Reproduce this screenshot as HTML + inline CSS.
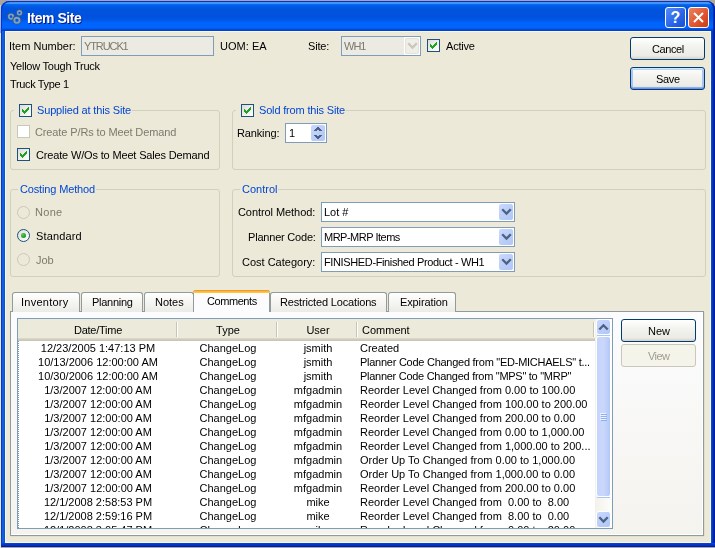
<!DOCTYPE html>
<html><head><meta charset="utf-8">
<style>
*{margin:0;padding:0;box-sizing:border-box}
html,body{width:715px;height:548px;overflow:hidden;background:#aca899;position:relative}
body{font-family:"Liberation Sans",sans-serif;font-size:11px;color:#000}
.a{position:absolute}
.t{position:absolute;font-size:11px;line-height:13px;white-space:nowrap;will-change:transform}
.g{color:#aca899}
.g2{color:#7d7a6d}
.b{color:#0046d5}
#win{left:1px;top:1px;width:714px;height:546px;border-radius:8px 8px 0 0;
 background:linear-gradient(90deg,#0019cf 0,#0855dd 1px,#166aee 2px,#0855dd 3px,#0855dd calc(100% - 4px),#0542cb calc(100% - 3px),#0130b8 calc(100% - 2px),#001ea0 calc(100% - 1px));overflow:hidden}
#title{left:0;top:0;width:714px;height:30px;border-radius:8px 8px 0 0;box-shadow:inset 1px 1px 0 #0831d9,inset -1px 0 0 #001ea0,inset -2px 0 0 #0130b8;
 background:linear-gradient(180deg,#0a3fd8 0,#0a3fd8 1px,#3d95ff 1px,#3d95ff 3px,#0a6cf0 3px,#005ce8 5px,#0053dc 8px,#0052de 17px,#005cf0 20px,#0064fd 22px,#0064fd 27px,#0050e0 28px,#003ccc 30px)}
#bottom{left:0;top:542px;width:714px;height:4px;background:linear-gradient(180deg,#0846dd,#0533c7 2px,#001b9e)}
#client{left:4px;top:30px;width:706px;height:512px;background:#ece9d8;border-top:1px solid #fff8e0;border-left:1px solid #fff8e0;border-right:1px solid #fff8e0;border-bottom:1px solid #fff8e0}
.ttl{will-change:transform;position:absolute;left:26px;top:9px;color:#fff;font:bold 14px "Liberation Sans",sans-serif;line-height:17px;letter-spacing:-0.45px;text-shadow:1px 1px 0 #0a1883;white-space:nowrap}
.tb{position:absolute;top:6px;width:21px;height:21px;border:1px solid #fff;border-radius:3px}
.field{position:absolute;border:1px solid #7f9db9;background:#fff}
.chk{position:absolute;width:13px;height:13px;border:1px solid #1c5180;background:linear-gradient(135deg,#dcdcd7,#fff)}
.chk.dis{border-color:#cac8bb;background:#fff}
.chk svg{position:absolute;left:2px;top:2px}
.grp{position:absolute;border:1px solid #d0d0bf;border-radius:3px}
.gl{position:absolute;background:#ece9d8;height:13px}
.btn{position:absolute;border:1px solid #003c74;border-radius:3px;background:linear-gradient(180deg,#fff 0,#f3f3ef 40%,#ecebe6 85%,#d6d0c5 100%);text-align:center;line-height:21px}
.btn.def{box-shadow:inset 0 1px 0 #cee7ff,inset 0 2px 0 #bcd4f6,inset 0 -1px 0 #6f91e6,inset 0 -2px 0 #8cb0ea,inset 2px 0 0 #aac4f4,inset -2px 0 0 #aac4f4}
.btn.dis{border-color:#c9c7ba;background:#f5f4ea;color:#a09d90}
.dd{position:absolute;width:14px;height:16px;border-radius:2px;background:linear-gradient(135deg,#cad8fd,#b9cdf8 60%,#b0c6f6)}
.dd svg{position:absolute;left:0;top:0}
.rad{position:absolute;width:13px;height:13px;border-radius:50%;border:1px solid #1c5180;background:linear-gradient(135deg,#dcdcd7,#fff)}
.rad.dis{border-color:#cac8bb;background:transparent}
.tab{position:absolute;top:292px;height:20px;border:1px solid #919b9c;border-bottom:none;border-radius:3px 3px 0 0;background:linear-gradient(180deg,#fff,#f3f3ef 60%,#ecebe6)}
.row{position:absolute;left:0;width:578px;height:14px}
.c1{position:absolute;left:0;width:160px;text-align:center}
.c2{position:absolute;left:160px;width:100px;text-align:center}
.c3{position:absolute;left:260px;width:80px;text-align:center}
.c4{position:absolute;left:342px;width:240px;text-align:left}
</style></head>
<body>
<div class="a" style="left:0;top:5px;width:1px;height:28px;background:linear-gradient(180deg,#c0d0f0,#90a8e0)"></div>
<div class="a" style="left:0;top:33px;width:1px;height:515px;background:#ece9d8"></div>
<div id="win" class="a">
 <div id="title" class="a">
  <svg class="a" style="left:2px;top:4px" width="22" height="22" viewBox="0 0 22 22">
   <g fill="none">
    <circle cx="8" cy="11.6" r="3.3" stroke="#34558e" stroke-width="2.6" stroke-dasharray="1.3 1.3"/>
    <circle cx="8" cy="11.6" r="2.2" stroke="#80a0b4" stroke-width="1.8"/>
    <circle cx="13.9" cy="15.3" r="3.7" stroke="#34558e" stroke-width="2.6" stroke-dasharray="1.3 1.3"/>
    <circle cx="13.9" cy="15.3" r="2.6" stroke="#80a0b4" stroke-width="1.9"/>
    <circle cx="16.5" cy="7.8" r="2.9" stroke="#34558e" stroke-width="2.4" stroke-dasharray="1.2 1.2"/>
    <circle cx="16.5" cy="7.8" r="1.9" stroke="#80a0b4" stroke-width="1.6"/>
   </g>
  </svg>
  <div class="ttl">Item Site</div>
  <div class="tb" style="left:664px;background:linear-gradient(135deg,#5a8cf8,#2663e9 60%,#1b4fd2)">
   <div class="a" style="left:0;top:0;width:19px;text-align:center;color:#fff;font:bold 16px/19px 'Liberation Sans'">?</div>
  </div>
  <div class="tb" style="left:687px;background:linear-gradient(135deg,#e9835f,#e0532c 60%,#c73d12)">
   <svg class="a" style="left:4px;top:4px" width="11" height="11" viewBox="0 0 11 11"><path d="M1 1L10 10M10 1L1 10" stroke="#fff" stroke-width="2"/></svg>
  </div>
 </div>
 <div id="bottom" class="a"></div>
 <div id="client" class="a"></div>
</div>

<!-- header row -->
<div class="t" style="left:9px;top:40px">Item Number:</div>
<div class="field" style="left:81px;top:36px;width:133px;height:20px;background:#ebebe3"></div>
<div class="t g2" style="left:84px;top:40px;letter-spacing:-1.1px">YTRUCK1</div>
<div class="t" style="left:220px;top:40px">UOM:</div><div class="t" style="left:252px;top:40px">EA</div>
<div class="t" style="left:308px;top:40px;letter-spacing:-0.2px">Site:</div>
<div class="field" style="left:341px;top:36px;width:80px;height:20px;background:#ebebe3"></div>
<div class="t g2" style="left:344px;top:40px;letter-spacing:-1px">WH1</div>
<div class="a" style="left:404px;top:37px;width:16px;height:18px;background:#fff"></div>
<div class="a" style="left:405px;top:38px;width:14px;height:16px;border-radius:2px;background:#efeee8;box-shadow:inset 0 0 0 1px #e4e2d8"><svg width="14" height="16" viewBox="0 0 14 16" style="position:absolute;left:0;top:0"><path d="M3.2 5.2L7.5 9.5L11.8 5.2" fill="none" stroke="#c9c7ba" stroke-width="2.3"/></svg></div>
<div class="chk" style="left:427px;top:39px"><svg width="7" height="7" viewBox="0 0 7 7" shape-rendering="crispEdges"><path d="M0 2h1v3H0zM1 3h1v3H1zM2 4h1v3H2zM3 3h1v3H3zM4 2h1v3H4zM5 1h1v3H5zM6 0h1v3H6z" fill="#21a121"/></svg></div>
<div class="t" style="left:446px;top:40px;letter-spacing:-0.2px">Active</div>
<div class="btn" style="left:630px;top:37px;width:75px;height:23px"><div class="t" style="left:21px;top:5px;letter-spacing:-0.4px">Cancel</div></div>
<div class="btn def" style="left:630px;top:67px;width:75px;height:23px"><div class="t" style="left:25px;top:5px;letter-spacing:-0.3px">Save</div></div>

<div class="t" style="left:10px;top:60px;letter-spacing:-0.24px">Yellow Tough Truck</div>
<div class="t" style="left:10px;top:78px;letter-spacing:-0.36px">Truck Type 1</div>

<!-- supplied group -->
<div class="grp" style="left:10px;top:110px;width:210px;height:60px"></div>
<div class="gl" style="left:14px;top:103px;width:118px"></div>
<div class="chk" style="left:19px;top:104px"><svg width="7" height="7" viewBox="0 0 7 7" shape-rendering="crispEdges"><path d="M0 2h1v3H0zM1 3h1v3H1zM2 4h1v3H2zM3 3h1v3H3zM4 2h1v3H4zM5 1h1v3H5zM6 0h1v3H6z" fill="#21a121"/></svg></div>
<div class="t b" style="left:37px;top:104px;letter-spacing:-0.15px">Supplied at this Site</div>
<div class="chk dis" style="left:17px;top:125px"></div>
<div class="t g2" style="left:35px;top:126px;letter-spacing:-0.12px">Create P/Rs to Meet Demand</div>
<div class="chk" style="left:17px;top:148px"><svg width="7" height="7" viewBox="0 0 7 7" shape-rendering="crispEdges"><path d="M0 2h1v3H0zM1 3h1v3H1zM2 4h1v3H2zM3 3h1v3H3zM4 2h1v3H4zM5 1h1v3H5zM6 0h1v3H6z" fill="#21a121"/></svg></div>
<div class="t" style="left:36px;top:149px;letter-spacing:-0.16px">Create W/Os to Meet Sales Demand</div>

<!-- sold group -->
<div class="grp" style="left:232px;top:110px;width:474px;height:60px"></div>
<div class="gl" style="left:236px;top:103px;width:110px"></div>
<div class="chk" style="left:241px;top:104px"><svg width="7" height="7" viewBox="0 0 7 7" shape-rendering="crispEdges"><path d="M0 2h1v3H0zM1 3h1v3H1zM2 4h1v3H2zM3 3h1v3H3zM4 2h1v3H4zM5 1h1v3H5zM6 0h1v3H6z" fill="#21a121"/></svg></div>
<div class="t b" style="left:259px;top:104px;letter-spacing:-0.17px">Sold from this Site</div>
<div class="t" style="left:237px;top:127px;letter-spacing:-0.14px">Ranking:</div>
<div class="field" style="left:285px;top:123px;width:42px;height:20px"></div>
<div class="t" style="left:289px;top:127px">1</div>
<div class="a" style="left:311px;top:125px;width:14px;height:16px;border-radius:2px;background:linear-gradient(135deg,#cad8fd,#b9cdf8 60%,#b0c6f6)"><svg width="14" height="16" viewBox="0 0 14 16" shape-rendering="crispEdges"><path d="M6 2h2v1H6zM5 3h4v1H5zM4 4h6v1H4zM3 5h3v1H3zM8 5h3v1H8zM3 10h3v1H3zM8 10h3v1H8zM4 11h6v1H4zM5 12h4v1H5zM6 13h2v1H6z" fill="#4d6185"/></svg></div>

<!-- costing group -->
<div class="grp" style="left:10px;top:189px;width:210px;height:88px"></div>
<div class="gl" style="left:18px;top:183px;width:78px"></div>
<div class="t b" style="left:20px;top:183px;letter-spacing:-0.15px">Costing Method</div>
<div class="rad dis" style="left:17px;top:206px"></div>
<div class="t g2" style="left:35px;top:206px;letter-spacing:0.3px">None</div>
<div class="rad" style="left:17px;top:229px"><div class="a" style="left:3px;top:3px;width:5px;height:5px;border-radius:50%;background:radial-gradient(circle at 35% 35%,#55cc55,#1a9a1a 70%)"></div></div>
<div class="t" style="left:36px;top:230px;letter-spacing:0.14px">Standard</div>
<div class="rad dis" style="left:17px;top:253px"></div>
<div class="t g2" style="left:36px;top:254px">Job</div>

<!-- control group -->
<div class="grp" style="left:232px;top:189px;width:474px;height:88px"></div>
<div class="gl" style="left:240px;top:183px;width:38px"></div>
<div class="t b" style="left:242px;top:183px">Control</div>
<div class="t" style="left:238px;top:206px;letter-spacing:-0.07px">Control Method:</div>
<div class="t" style="left:248px;top:231px;letter-spacing:-0.2px">Planner Code:</div>
<div class="t" style="left:242px;top:256px">Cost Category:</div>
<div class="field" style="left:321px;top:202px;width:194px;height:20px"></div>
<div class="field" style="left:321px;top:227px;width:194px;height:20px"></div>
<div class="field" style="left:321px;top:252px;width:194px;height:20px"></div>
<div class="t" style="left:324px;top:206px">Lot #</div>
<div class="t" style="left:324px;top:231px;letter-spacing:-0.5px">MRP-MRP Items</div>
<div class="t" style="left:324px;top:256px;letter-spacing:-0.37px">FINISHED-Finished Product - WH1</div>
<div class="dd" style="left:499px;top:204px"><svg width="14" height="16" viewBox="0 0 14 16"><path d="M3.2 5.2L7.5 9.5L11.8 5.2" fill="none" stroke="#4d6185" stroke-width="2.3"/></svg></div>
<div class="dd" style="left:499px;top:229px"><svg width="14" height="16" viewBox="0 0 14 16"><path d="M3.2 5.2L7.5 9.5L11.8 5.2" fill="none" stroke="#4d6185" stroke-width="2.3"/></svg></div>
<div class="dd" style="left:499px;top:254px"><svg width="14" height="16" viewBox="0 0 14 16"><path d="M3.2 5.2L7.5 9.5L11.8 5.2" fill="none" stroke="#4d6185" stroke-width="2.3"/></svg></div>

<!-- tab pane -->
<div class="a" style="left:11px;top:312px;width:694px;height:225px;background:#dcd9ca;opacity:.7;border-radius:0 0 2px 0"></div>
<div class="a" style="left:10px;top:311px;width:694px;height:225px;border:1px solid #919b9c;background:linear-gradient(180deg,#fcfcfe,#f4f3ee);box-shadow:inset -1px -1px 0 #fff"></div>
<div class="tab" style="left:12px;width:68px"><div class="t" style="left:8px;top:3px;letter-spacing:0.25px">Inventory</div></div>
<div class="tab" style="left:81px;width:62px"><div class="t" style="left:10px;top:3px;letter-spacing:-0.28px">Planning</div></div>
<div class="tab" style="left:144px;width:50px"><div class="t" style="left:10px;top:3px">Notes</div></div>
<div class="tab" style="left:270px;width:117px"><div class="t" style="left:9px;top:3px;letter-spacing:-0.16px">Restricted Locations</div></div>
<div class="tab" style="left:388px;width:68px"><div class="t" style="left:11px;top:3px;letter-spacing:-0.11px">Expiration</div></div>
<div class="a" style="left:193px;top:290px;width:77px;height:22px;border:1px solid #919b9c;border-top:none;border-bottom:none;border-radius:3px 3px 0 0;background:#fcfcfe">
 <div class="a" style="left:-1px;top:0;width:77px;height:3px;border-radius:3px 3px 0 0;background:linear-gradient(180deg,#e68b2c,#ffc73c 2px,#ffc73c)"></div>
 <div class="t" style="left:13px;top:5px;letter-spacing:-0.43px">Comments</div>
</div>

<!-- list view -->
<div class="a" style="left:17px;top:318px;width:596px;height:211px;border:1px solid #7f9db9;background:#fff;overflow:hidden">
 <div class="a" style="left:0;top:0;width:577px;height:22px;background:linear-gradient(180deg,#ebeadb 0,#ebeadb 19px,#e2decd 19px,#d6d2c2 20px,#cbc7b8 21px)">
  <div class="a" style="left:575px;top:3px;width:1px;height:15px;background:#c7c5b2"></div><div class="a" style="left:576px;top:3px;width:1px;height:15px;background:#fff"></div>
  <div class="a" style="left:158px;top:3px;width:1px;height:15px;background:#c7c5b2"></div><div class="a" style="left:159px;top:3px;width:1px;height:15px;background:#fff"></div>
  <div class="a" style="left:258px;top:3px;width:1px;height:15px;background:#c7c5b2"></div><div class="a" style="left:259px;top:3px;width:1px;height:15px;background:#fff"></div>
  <div class="a" style="left:338px;top:3px;width:1px;height:15px;background:#c7c5b2"></div><div class="a" style="left:339px;top:3px;width:1px;height:15px;background:#fff"></div>
  <div class="t" style="left:1px;width:158px;text-align:center;top:5px;letter-spacing:-0.25px">Date/Time</div>
  <div class="t" style="left:161px;width:98px;text-align:center;top:5px">Type</div>
  <div class="t" style="left:261px;width:78px;text-align:center;top:5px">User</div>
  <div class="t" style="left:344px;top:5px">Comment</div>
 </div>
 <div class="a" style="left:0;top:22px;width:1px;height:189px;background:repeating-linear-gradient(180deg,#7f9db9 0,#7f9db9 1px,#fff 1px,#fff 2px)"></div>
 <div id="rows" class="a" style="left:0;top:22px;width:578px;height:189px">
  <div class="row" style="top:0px"><div class="t c1" style="top:1px">12/23/2005 1:47:13 PM</div><div class="t c2" style="top:1px">ChangeLog</div><div class="t c3" style="top:1px">jsmith</div><div class="t c4" style="top:1px">Created</div></div>
  <div class="row" style="top:14px"><div class="t c1" style="top:1px">10/13/2006 12:00:00 AM</div><div class="t c2" style="top:1px">ChangeLog</div><div class="t c3" style="top:1px">jsmith</div><div class="t c4" style="top:1px;letter-spacing:-0.26px;width:240px">Planner Code Changed from "ED-MICHAELS" t...</div></div>
  <div class="row" style="top:28px"><div class="t c1" style="top:1px">10/30/2006 12:00:00 AM</div><div class="t c2" style="top:1px">ChangeLog</div><div class="t c3" style="top:1px">jsmith</div><div class="t c4" style="top:1px;letter-spacing:-0.28px">Planner Code Changed from "MPS" to "MRP"</div></div>
  <div class="row" style="top:42px"><div class="t c1" style="top:1px">1/3/2007 12:00:00 AM</div><div class="t c2" style="top:1px">ChangeLog</div><div class="t c3" style="top:1px">mfgadmin</div><div class="t c4" style="top:1px">Reorder Level Changed from 0.00 to 100.00</div></div>
  <div class="row" style="top:56px"><div class="t c1" style="top:1px">1/3/2007 12:00:00 AM</div><div class="t c2" style="top:1px">ChangeLog</div><div class="t c3" style="top:1px">mfgadmin</div><div class="t c4" style="top:1px">Reorder Level Changed from 100.00 to 200.00</div></div>
  <div class="row" style="top:70px"><div class="t c1" style="top:1px">1/3/2007 12:00:00 AM</div><div class="t c2" style="top:1px">ChangeLog</div><div class="t c3" style="top:1px">mfgadmin</div><div class="t c4" style="top:1px">Reorder Level Changed from 200.00 to 0.00</div></div>
  <div class="row" style="top:84px"><div class="t c1" style="top:1px">1/3/2007 12:00:00 AM</div><div class="t c2" style="top:1px">ChangeLog</div><div class="t c3" style="top:1px">mfgadmin</div><div class="t c4" style="top:1px">Reorder Level Changed from 0.00 to 1,000.00</div></div>
  <div class="row" style="top:98px"><div class="t c1" style="top:1px">1/3/2007 12:00:00 AM</div><div class="t c2" style="top:1px">ChangeLog</div><div class="t c3" style="top:1px">mfgadmin</div><div class="t c4" style="top:1px">Reorder Level Changed from 1,000.00 to 200...</div></div>
  <div class="row" style="top:112px"><div class="t c1" style="top:1px">1/3/2007 12:00:00 AM</div><div class="t c2" style="top:1px">ChangeLog</div><div class="t c3" style="top:1px">mfgadmin</div><div class="t c4" style="top:1px">Order Up To Changed from 0.00 to 1,000.00</div></div>
  <div class="row" style="top:126px"><div class="t c1" style="top:1px">1/3/2007 12:00:00 AM</div><div class="t c2" style="top:1px">ChangeLog</div><div class="t c3" style="top:1px">mfgadmin</div><div class="t c4" style="top:1px">Order Up To Changed from 1,000.00 to 0.00</div></div>
  <div class="row" style="top:140px"><div class="t c1" style="top:1px">1/3/2007 12:00:00 AM</div><div class="t c2" style="top:1px">ChangeLog</div><div class="t c3" style="top:1px">mfgadmin</div><div class="t c4" style="top:1px">Reorder Level Changed from 200.00 to 0.00</div></div>
  <div class="row" style="top:154px"><div class="t c1" style="top:1px">12/1/2008 2:58:53 PM</div><div class="t c2" style="top:1px">ChangeLog</div><div class="t c3" style="top:1px">mike</div><div class="t c4" style="top:1px">Reorder Level Changed from &nbsp;0.00 to &nbsp;8.00</div></div>
  <div class="row" style="top:168px"><div class="t c1" style="top:1px">12/1/2008 2:59:16 PM</div><div class="t c2" style="top:1px">ChangeLog</div><div class="t c3" style="top:1px">mike</div><div class="t c4" style="top:1px">Reorder Level Changed from &nbsp;8.00 to &nbsp;0.00</div></div>
  <div class="row" style="top:182px"><div class="t c1" style="top:1px">12/1/2008 3:05:47 PM</div><div class="t c2" style="top:1px">ChangeLog</div><div class="t c3" style="top:1px">mike</div><div class="t c4" style="top:1px">Reorder Level Changed from &nbsp;0.00 to &nbsp;20.00</div></div>
 </div>
 <!-- scrollbar -->
 <div class="a" style="left:577px;top:0;width:17px;height:209px;background:linear-gradient(90deg,#f3f1ec,#fefefa)"></div>
 <div class="a" style="left:578px;top:0;width:15px;height:16px;border-radius:3px;border:1px solid #fff;background:linear-gradient(135deg,#cad8fd,#b9cdf8 60%,#b0c6f6)"></div>
 <svg class="a" style="left:578px;top:0" width="15" height="16" viewBox="0 0 15 16"><path d="M3.3 10.5L7.5 6.3L11.7 10.5" fill="none" stroke="#4d6185" stroke-width="2.3"/></svg>
 <div class="a" style="left:579px;top:16px;width:13px;height:1px;background:#aec4f2"></div>
 <div class="a" style="left:578px;top:17px;width:15px;height:161px;border-radius:3px;border:1px solid #fff;background:linear-gradient(90deg,#c6d5fc,#cad7fb 50%,#b3c8f7)"></div>
 <div class="a" style="left:579px;top:178px;width:13px;height:1px;background:#aec4f2"></div>
 <div class="a" style="left:582px;top:94px;width:6px;height:8px;background:repeating-linear-gradient(180deg,#eef3fe 0,#eef3fe 1px,transparent 1px,transparent 2px)"></div>
 <div class="a" style="left:583px;top:94px;width:6px;height:8px;background:repeating-linear-gradient(180deg,transparent 0,transparent 1px,#8cb0f8 1px,#8cb0f8 2px)"></div>
 <div class="a" style="left:578px;top:192px;width:15px;height:17px;border-radius:3px;border:1px solid #fff;background:linear-gradient(135deg,#cad8fd,#b9cdf8 60%,#b0c6f6)"></div>
 <svg class="a" style="left:578px;top:192px" width="15" height="17" viewBox="0 0 15 17"><path d="M3.3 6.3L7.5 10.5L11.7 6.3" fill="none" stroke="#4d6185" stroke-width="2.3"/></svg>
</div>

<div class="btn" style="left:621px;top:319px;width:75px;height:23px"><div class="t" style="left:26px;top:5px">New</div></div>
<div class="btn dis" style="left:621px;top:344px;width:75px;height:23px"><div class="t" style="left:26px;top:5px;letter-spacing:-0.6px">View</div></div>

</body></html>
